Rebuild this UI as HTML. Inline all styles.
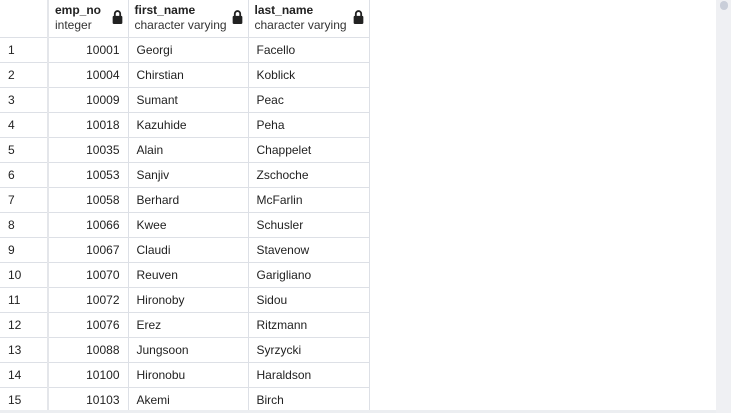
<!DOCTYPE html>
<html><head><meta charset="utf-8"><style>
*{margin:0;padding:0;box-sizing:border-box}
body{width:731px;height:413px;overflow:hidden;background:#fff;font-family:"Liberation Sans",Arial,sans-serif;font-size:12px;color:#222;position:relative}
table{border-collapse:collapse;position:absolute;left:0;top:0;table-layout:fixed}
td,th{border-right:1px solid #dde0e6;border-bottom:1px solid #dde0e6;height:25px;padding:0 8px;white-space:nowrap;font-weight:normal;text-align:left}
th{height:37px;vertical-align:middle;position:relative;line-height:15px;padding:0 6px}
th b{display:block;font-weight:bold;font-size:12px}
th span{font-size:12px;color:#333}
td.n{text-align:right;padding-right:8px}
td.r{padding-left:8px}
td.idx{border-right:2px solid #e4e6ea}
.lock{position:absolute;right:5px;top:10px;width:11px;height:14px}
.sb{position:absolute;left:716px;top:0;width:15px;height:413px;background:#eff0f3}
.th{position:absolute;left:720px;top:1px;width:8px;height:9px;border-radius:5px;background:#c9ced9}
.hb{position:absolute;left:0;top:410px;width:716px;height:3px;background:#eceef1}
</style></head><body>
<table>
<colgroup><col style="width:48px"><col style="width:80px"><col style="width:120px"><col style="width:121px"></colgroup>
<tr><th class="idx" style="border-right:2px solid #e4e6ea"></th>
<th><b>emp_no</b><span>integer</span><svg class="lock" viewBox="0 0 10 13"><path d="M2.5 6V3.5a2.5 2.5 0 0 1 5 0V6" fill="none" stroke="#222" stroke-width="1.7"/><rect x="0.5" y="5.5" width="9" height="7.5" rx="1" fill="#222"/></svg></th>
<th><b>first_name</b><span>character varying</span><svg class="lock" viewBox="0 0 10 13"><path d="M2.5 6V3.5a2.5 2.5 0 0 1 5 0V6" fill="none" stroke="#222" stroke-width="1.7"/><rect x="0.5" y="5.5" width="9" height="7.5" rx="1" fill="#222"/></svg></th>
<th><b>last_name</b><span>character varying</span><svg class="lock" viewBox="0 0 10 13"><path d="M2.5 6V3.5a2.5 2.5 0 0 1 5 0V6" fill="none" stroke="#222" stroke-width="1.7"/><rect x="0.5" y="5.5" width="9" height="7.5" rx="1" fill="#222"/></svg></th></tr>
<tr><td class="idx">1</td><td class="n">10001</td><td class="r">Georgi</td><td class="r">Facello</td></tr>
<tr><td class="idx">2</td><td class="n">10004</td><td class="r">Chirstian</td><td class="r">Koblick</td></tr>
<tr><td class="idx">3</td><td class="n">10009</td><td class="r">Sumant</td><td class="r">Peac</td></tr>
<tr><td class="idx">4</td><td class="n">10018</td><td class="r">Kazuhide</td><td class="r">Peha</td></tr>
<tr><td class="idx">5</td><td class="n">10035</td><td class="r">Alain</td><td class="r">Chappelet</td></tr>
<tr><td class="idx">6</td><td class="n">10053</td><td class="r">Sanjiv</td><td class="r">Zschoche</td></tr>
<tr><td class="idx">7</td><td class="n">10058</td><td class="r">Berhard</td><td class="r">McFarlin</td></tr>
<tr><td class="idx">8</td><td class="n">10066</td><td class="r">Kwee</td><td class="r">Schusler</td></tr>
<tr><td class="idx">9</td><td class="n">10067</td><td class="r">Claudi</td><td class="r">Stavenow</td></tr>
<tr><td class="idx">10</td><td class="n">10070</td><td class="r">Reuven</td><td class="r">Garigliano</td></tr>
<tr><td class="idx">11</td><td class="n">10072</td><td class="r">Hironoby</td><td class="r">Sidou</td></tr>
<tr><td class="idx">12</td><td class="n">10076</td><td class="r">Erez</td><td class="r">Ritzmann</td></tr>
<tr><td class="idx">13</td><td class="n">10088</td><td class="r">Jungsoon</td><td class="r">Syrzycki</td></tr>
<tr><td class="idx">14</td><td class="n">10100</td><td class="r">Hironobu</td><td class="r">Haraldson</td></tr>
<tr><td class="idx">15</td><td class="n">10103</td><td class="r">Akemi</td><td class="r">Birch</td></tr>
</table>
<div class="hb"></div>
<div class="sb"></div><div class="th"></div>
</body></html>
